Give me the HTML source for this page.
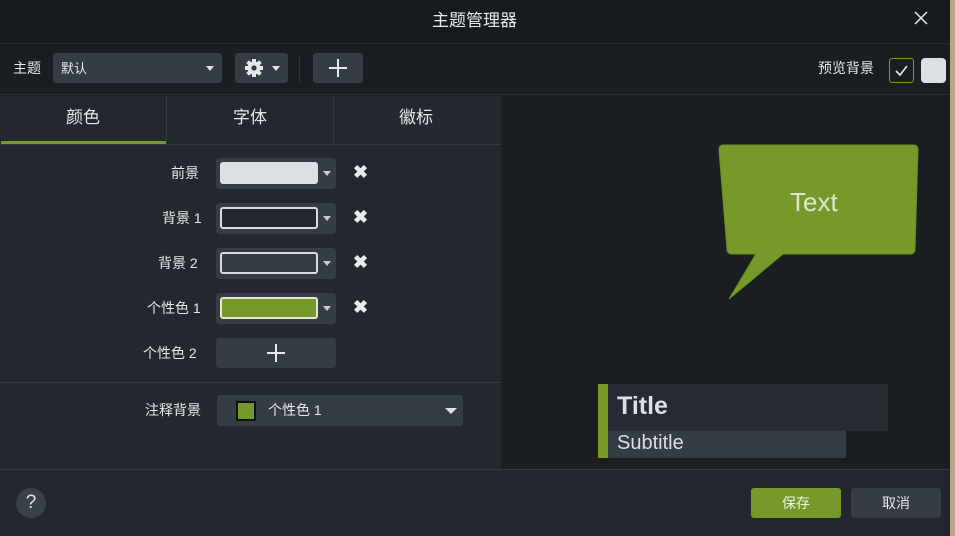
<!DOCTYPE html>
<html><head><meta charset="utf-8"><style>
*{margin:0;padding:0;box-sizing:border-box}
body{width:955px;height:536px;background:#1a1d21;font-family:"Liberation Sans","Noto Sans CJK SC",sans-serif;color:#e6e8ea;position:relative;overflow:hidden}
.a{position:absolute}
.t{font-size:14px;white-space:nowrap}
.btn{background:#363c44;border-radius:3px}
.caret{width:0;height:0;border-left:4px solid transparent;border-right:4px solid transparent;border-top:5px solid #e0e2e5}
.sw{position:absolute;left:4px;top:4px;width:98px;height:22px;border-radius:3px;border:2px solid #d8dade}
.x{font-size:18px;font-weight:bold;color:#e8eaec}
</style></head><body>
<div class="a" style="left:0;top:0;width:950px;height:44px;background:#181b1e;border-bottom:1px solid #272b30"></div>
<div class="a t" style="left:432px;top:6px;font-size:17px;color:#e8eaec">主题管理器</div>
<svg class="a" style="left:914px;top:11px" width="14" height="14" viewBox="0 0 14 14"><path d="M1 1 L13 13 M13 1 L1 13" stroke="#e8eaec" stroke-width="1.5"/></svg>
<div class="a" style="left:0;top:45px;width:950px;height:50px;background:#1a1d21;border-bottom:1px solid #2a2e33"></div>
<div class="a t" style="left:13px;top:58px">主题</div>
<div class="a btn" style="left:53px;top:53px;width:169px;height:30px"><span class="a t" style="left:8px;top:5px;font-size:13px">默认</span><div class="a caret" style="left:153px;top:13px"></div></div>
<div class="a btn" style="left:235px;top:53px;width:53px;height:30px">
<svg class="a" style="left:9px;top:5px" width="20" height="20" viewBox="0 0 20 20"><g fill="#e6e8ea"><circle cx="10" cy="10" r="6.5"/><g id="g"><rect x="8" y="1" width="4" height="4"/><rect x="8" y="15" width="4" height="4"/><rect x="1" y="8" width="4" height="4"/><rect x="15" y="8" width="4" height="4"/></g><use href="#g" transform="rotate(45 10 10)"/></g><circle cx="10" cy="10" r="2.6" fill="#363c44"/></svg>
<div class="a caret" style="left:37px;top:13px"></div></div>
<div class="a" style="left:299px;top:55px;width:1px;height:28px;background:#30353b"></div>
<div class="a btn" style="left:313px;top:53px;width:50px;height:30px"><div class="a" style="left:16px;top:14px;width:18px;height:2px;background:#e6e8ea"></div><div class="a" style="left:24px;top:6px;width:2px;height:18px;background:#e6e8ea"></div></div>
<div class="a t" style="left:818px;top:58px">预览背景</div>
<div class="a" style="left:889px;top:58px;width:25px;height:25px;border:1px solid #76992a;border-radius:3px;background:#1b1e21"><svg class="a" style="left:4px;top:4px" width="15" height="15" viewBox="0 0 15 15"><path d="M2 8 L6 12 L13 3" stroke="#e6e8ea" stroke-width="1.6" fill="none"/></svg></div>
<div class="a" style="left:921px;top:58px;width:25px;height:25px;background:#dcdfe4;border-radius:4px"></div>
<div class="a" style="left:0;top:96px;width:501px;height:374px;background:#23272e"></div>
<div class="a" style="left:166px;top:96px;width:1px;height:48px;background:#343940"></div>
<div class="a" style="left:333px;top:96px;width:1px;height:48px;background:#343940"></div>
<div class="a" style="left:0;top:144px;width:501px;height:1px;background:#343940"></div>
<div class="a" style="left:1px;top:141px;width:165px;height:3px;background:#76992a"></div>
<div class="a t" style="left:66px;top:103px;font-size:17px">颜色</div>
<div class="a t" style="left:233px;top:103px;font-size:17px">字体</div>
<div class="a t" style="left:399px;top:103px;font-size:17px">徽标</div>

<div class="a t" style="left:171px;top:163px">前景</div>
<div class="a btn" style="left:216px;top:158px;width:120px;height:31px"><div class="sw" style="background:#dcdfe4;border-color:#dcdfe4"></div><div class="a caret" style="left:107px;top:13px;border-top-color:#c8cacd"></div></div>
<div class="a x" style="left:353px;top:162px">✖</div>

<div class="a t" style="left:162px;top:208px">背景 1</div>
<div class="a btn" style="left:216px;top:203px;width:120px;height:31px"><div class="sw" style="background:#23272e"></div><div class="a caret" style="left:107px;top:13px;border-top-color:#c8cacd"></div></div>
<div class="a x" style="left:353px;top:207px">✖</div>

<div class="a t" style="left:158px;top:253px">背景 2</div>
<div class="a btn" style="left:216px;top:248px;width:120px;height:31px"><div class="sw" style="background:#363c44"></div><div class="a caret" style="left:107px;top:13px;border-top-color:#c8cacd"></div></div>
<div class="a x" style="left:353px;top:252px">✖</div>

<div class="a t" style="left:147px;top:298px">个性色 1</div>
<div class="a btn" style="left:216px;top:293px;width:120px;height:31px"><div class="sw" style="background:#76992a;border-color:#e4e8d0"></div><div class="a caret" style="left:107px;top:13px;border-top-color:#c8cacd"></div></div>
<div class="a x" style="left:353px;top:297px">✖</div>

<div class="a t" style="left:143px;top:343px">个性色 2</div>
<div class="a btn" style="left:216px;top:338px;width:120px;height:30px"><div class="a" style="left:51px;top:14px;width:18px;height:2px;background:#e6e8ea"></div><div class="a" style="left:59px;top:6px;width:2px;height:18px;background:#e6e8ea"></div></div>
<div class="a" style="left:0;top:382px;width:501px;height:1px;background:#363b42"></div>
<div class="a t" style="left:145px;top:400px">注释背景</div>
<div class="a btn" style="left:217px;top:395px;width:246px;height:31px"><div class="a" style="left:19px;top:6px;width:20px;height:20px;background:#76992a;border:2px solid #111"></div><span class="a t" style="left:51px;top:5px">个性色 1</span><div class="a caret" style="left:228px;top:13px;border-left-width:6px;border-right-width:6px;border-top-width:6px"></div></div>
<div class="a" style="left:501px;top:96px;width:449px;height:374px;background:#1b1e21"></div>
<svg class="a" style="left:715px;top:143px" width="205" height="160" viewBox="0 0 205 160"><path d="M8 2 H198 Q203 2 203 7 L200 106 Q200 111 195 111 H68 L14 156 L41 111 H17 Q12 111 12 106 L4 7 Q4 2 8 2Z" fill="#76992a" stroke="#6b8d24"/></svg>
<div class="a" style="left:790px;top:187px;font-size:26px;color:#dfe6d0">Text</div>
<div class="a" style="left:598px;top:384px;width:290px;height:47px;background:#262a31"></div>
<div class="a" style="left:598px;top:431px;width:248px;height:27px;background:#363c44"></div>
<div class="a" style="left:598px;top:384px;width:10px;height:74px;background:#76992a"></div>
<div class="a" style="left:617px;top:392px;font-size:25px;color:#dcdfe4;font-weight:bold">Title</div>
<div class="a" style="left:617px;top:432px;font-size:20px;color:#dcdfe4">Subtitle</div>
<div class="a" style="left:0;top:469px;width:950px;height:1px;background:#363b42"></div>
<div class="a" style="left:0;top:470px;width:950px;height:66px;background:#23262e"></div>
<div class="a" style="left:16px;top:488px;width:30px;height:30px;border-radius:50%;background:#3a4048;text-align:center;line-height:30px;font-size:19px;color:#e0e2e5">?</div>
<div class="a" style="left:751px;top:488px;width:90px;height:30px;background:#76992a;border-radius:3px;text-align:center;line-height:30px;font-size:14px;color:#eef2e2">保存</div>
<div class="a" style="left:851px;top:488px;width:90px;height:30px;background:#363c44;border-radius:3px;text-align:center;line-height:30px;font-size:14px">取消</div>
<div class="a" style="left:950px;top:0;width:5px;height:536px;background:#b9a58a"></div>
</body></html>
